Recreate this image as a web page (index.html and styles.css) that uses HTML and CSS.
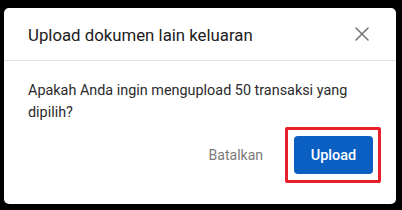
FILE: index.html
```html
<!DOCTYPE html>
<html lang="id">
<head>
<meta charset="utf-8">
<link rel="stylesheet" href="styles.css">
</head>
<body>
<div class="dialog">
  <div class="header">
    <div class="title">Upload dokumen lain keluaran</div>
    <button class="close" aria-label="Tutup">
      <svg width="14" height="14" viewBox="0 0 14 14"><path d="M1 1L13 13M13 1L1 13" stroke="#767676" stroke-width="1.6" stroke-linecap="round"/></svg>
    </button>
  </div>
  <div class="content">Apakah Anda ingin mengupload 50 transaksi yang dipilih?</div>
  <div class="footer">
    <button class="cancel">Batalkan</button>
    <div class="highlight">
      <button class="primary">Upload</button>
    </div>
  </div>
</div>
</body>
</html>
```
FILE: styles.css
```css
html, body {
  margin: 0;
  background: #000;
}
body {
  padding: 8px 6px 6px 4px;
  font-family: Roboto, "Liberation Sans", sans-serif;
}
.dialog {
  background: #fff;
  border-radius: 5px;
  width: 392px;
  height: 196px;
  display: flex;
  flex-direction: column;
  overflow: hidden;
}
.header {
  border-bottom: 1px solid #e3e3e3;
  display: flex;
  align-items: center;
  justify-content: space-between;
  padding: 0 27px 0 24px;
  box-sizing: border-box;
  flex: none;
  height: 53px;
}
.title {
  font-size: 16.8px;
  color: #212121;
  padding-top: 1px;
}
.close {
  border: 0;
  background: none;
  padding: 0;
  width: 14px;
  height: 14px;
  display: flex;
}
.content {
  padding: 19px 24px 0 24px;
  font-size: 14.4px;
  line-height: 22px;
  color: #2b2b2b;
}
.footer {
  display: flex;
  justify-content: flex-end;
  align-items: center;
  padding: 3px 15px 0 24px;
}
.cancel {
  border: 0;
  background: none;
  font-family: inherit;
  font-size: 14px;
  color: #7a7a7a;
  padding: 0;
  margin-right: 22px;
}
.highlight {
  border: 3px solid #e81e2a;
  border-radius: 2px;
  padding: 6px 5px 6px 6px;
  display: flex;
}
.primary {
  border: 0;
  background: #0b5ec2;
  color: #fff;
  font-family: inherit;
  font-weight: 500;
  font-size: 14.5px;
  width: 79px;
  height: 38px;
  border-radius: 4px;
  padding: 0;
}
```
